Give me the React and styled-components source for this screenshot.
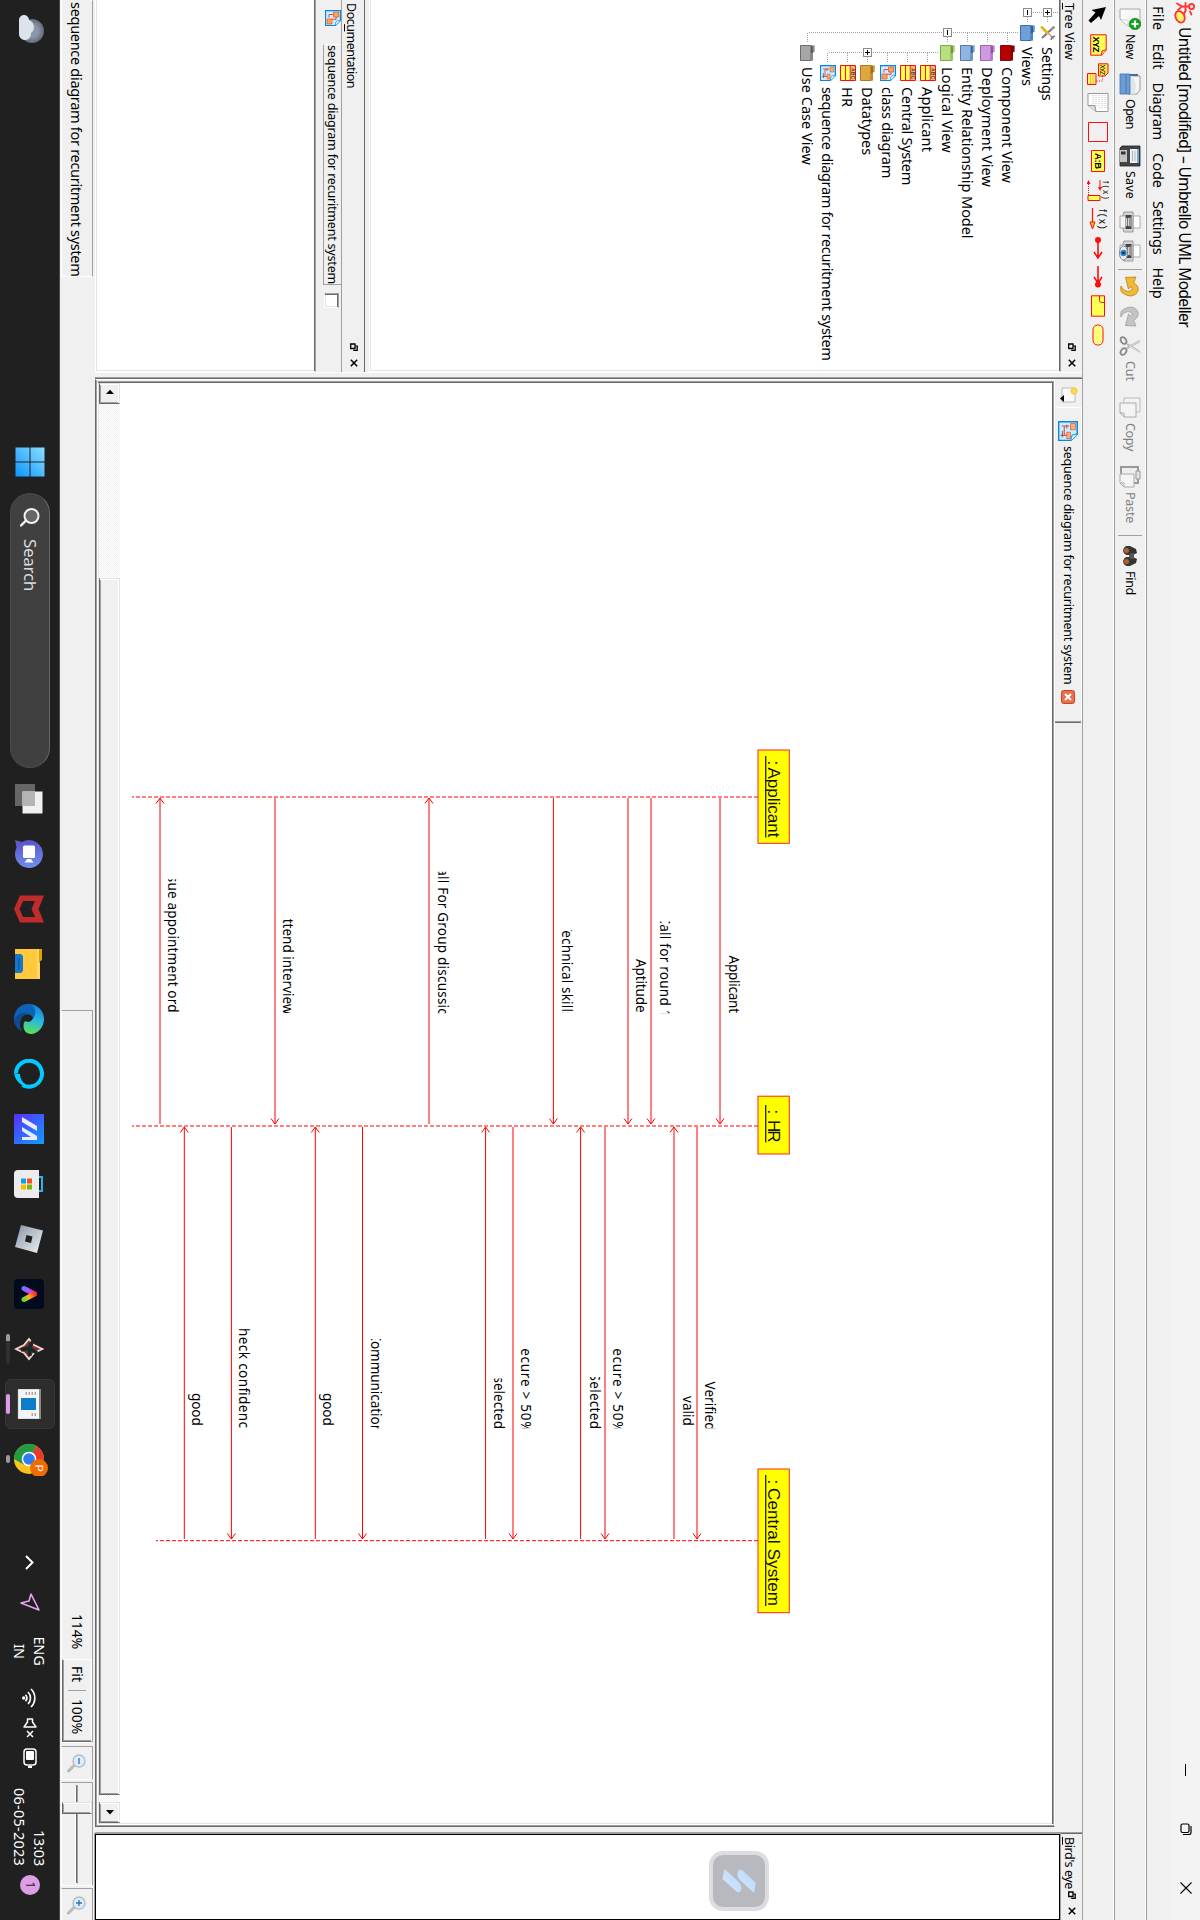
import React, { useLayoutEffect, useRef, useState } from 'react';
import styled, { createGlobalStyle, css } from 'styled-components';

const Global = createGlobalStyle`
  html, body { margin: 0; padding: 0; background: #f0f0f0; }
  * { box-sizing: border-box; }
  svg { display: block; flex: none; }
`;

const UI = `"Noto Sans", "Open Sans", sans-serif`;

const Viewport = styled.div`
  width: 1200px;
  height: 1920px;
  overflow: hidden;
`;

const Desktop = styled.div`
  width: 1920px;
  height: 1200px;
  transform-origin: 0 0;
  transform: translateX(1200px) rotate(90deg);
  display: flex;
  flex-direction: column;
  background: #f0f0f0;
  color: #000;
  font-family: ${UI};
  overflow: hidden;
`;

/* ---------- text that is tracked to a given width ---------- */

const Word = styled.span`
  display: inline-block;
  flex: none;
  white-space: pre;
  font-size: ${p => p.$size}px;
  line-height: ${p => p.$lh || 20}px;
  color: ${p => p.$color || 'inherit'};
  u { text-underline-offset: 2px; text-decoration-thickness: 1px; }
`;

function Label({ size = 14.5, width, lh, color, children }) {
  const ref = useRef(null);
  const [spacing, setSpacing] = useState(0);
  useLayoutEffect(() => {
    const el = ref.current;
    const natural = parseFloat(getComputedStyle(el).width);
    const count = el.textContent.length;
    if (width && count > 1) setSpacing((width - natural) / count);
  }, [width]);
  return (
    <Word ref={ref} $size={size} $lh={lh} $color={color} style={{ letterSpacing: spacing }}>
      {children}
    </Word>
  );
}

/* ---------- title, menus, toolbars ---------- */

const TitleBar = styled.header`
  height: 29px;
  flex: none;
  display: flex;
  align-items: center;
  background: #f3f3f3;
  padding: 0 26px 0 2px;
  gap: 3px;
`;
const WindowButtons = styled.div`
  margin-left: auto;
  margin-bottom: 2px;
  display: flex;
  gap: 47px;
`;
const MenuBar = styled.nav`
  height: 25px;
  flex: none;
  display: flex;
  align-items: center;
  gap: 13px;
  padding-left: 6px;
  border-bottom: 1px solid #a0a0a0;
`;
const Toolbar = styled.div`
  height: 32px;
  flex: none;
  display: flex;
  align-items: center;
  border-top: 1px solid #fff;
  border-bottom: 1px solid #a0a0a0;
  padding-left: ${p => p.$pad}px;
`;
const ToolButton = styled.div`
  width: ${p => p.$w}px;
  flex: none;
  display: flex;
  align-items: center;
  gap: 4px;
`;
const ToolSeparator = styled.div`
  width: 1px;
  height: 24px;
  margin-right: ${p => p.$gap}px;
  background: #a0a0a0;
`;
const Tool = styled.div`
  width: 29px;
  display: flex;
  justify-content: center;
`;

/* ---------- docks ---------- */

const Work = styled.main`
  height: 987px;
  flex: none;
  display: flex;
`;
const LeftDock = styled.aside`
  width: 373px;
  flex: none;
  display: flex;
  flex-direction: column;
  border-right: 1px solid #fff;
`;
const DockTitle = styled.div`
  height: ${p => p.$h}px;
  flex: none;
  display: flex;
  align-items: flex-start;
  justify-content: space-between;
  padding: 3px 5px 0 3px;
`;
const DockButtons = styled.div`
  display: flex;
  padding-top: 3px;
  gap: 8px;
`;
const Sunken = styled.div`
  background: #fff;
  border: 1px solid;
  border-color: #a0a0a0 #fff #fff #a0a0a0;
  box-shadow: inset 1px 1px 0 #696969, inset -1px -1px 0 #e3e3e3;
`;
const TreeFrame = styled(Sunken)`
  height: 692px;
  flex: none;
  border-left: 0;
  box-shadow: inset 0 1px 0 #696969, inset -1px -1px 0 #e3e3e3;
  padding: 2px 0 0 3px;
`;
const TreeRow = styled.div`
  height: 20px;
  display: flex;
  align-items: center;
`;
const Branch = styled.div`
  width: 20px;
  height: 20px;
  flex: none;
  display: flex;
`;
const TreeIcon = styled.div`
  width: 16px;
  margin: 0 6px 0 2px;
  flex: none;
`;
const DocDock = styled.section`
  margin-top: 4px;
  flex: 1;
  display: flex;
  flex-direction: column;
  border-top: 1px solid #696969;
`;
const DocHeader = styled.div`
  height: 26px;
  flex: none;
  border-top: 1px solid #a0a0a0;
  display: flex;
  align-items: flex-start;
  padding-left: 10px;
`;
const DocName = styled.div`
  margin-left: 18px;
  width: 241px;
  height: 18px;
  border: 1px solid;
  border-color: #a0a0a0 #a0a0a0 #a0a0a0 #fff;
  border-top: 0;
  display: flex;
  align-items: center;
`;
const CheckBox = styled(Sunken)`
  width: 15px;
  height: 15px;
  margin: 2px 0 0 8px;
`;
const DocBody = styled(Sunken)`
  flex: 1;
  border-left: 0;
  box-shadow: inset 0 1px 0 #696969, inset -1px -1px 0 #e3e3e3;
`;

/* ---------- central area ---------- */

const Mdi = styled.section`
  width: 1450px;
  margin-left: 4px;
  flex: none;
  display: flex;
  flex-direction: column;
  border-left: 1px solid #a0a0a0;
  box-shadow: inset 1px 0 0 #696969;
  padding-left: 1px;
`;
const TabBar = styled.div`
  height: 27px;
  flex: none;
  display: flex;
  padding-left: 8px;
`;
const NewTab = styled.div`
  width: 20px;
  display: flex;
  align-items: center;
`;
const Tab = styled.div`
  width: 316px;
  border: 1px solid #fff;
  border-right: 1px solid #696969;
  border-bottom: 0;
  box-shadow: inset -1px 0 0 #a0a0a0;
  border-radius: 2px 2px 0 0;
  display: flex;
  align-items: center;
  padding-left: 13px;
  gap: 5px;
`;
const TabClose = styled.div`
  width: 14px;
  height: 14px;
`;
const Raised = styled.div`
  flex: 1;
  width: 1448px;
  display: flex;
  border: 1px solid;
  border-color: #fff #696969 #696969 #fff;
  box-shadow: inset -1px -1px 0 #a0a0a0;
  padding: 0 1px 1px 1px;
`;
const Inner = styled(Sunken)`
  flex: 1;
  padding: 1px;
  display: flex;
  flex-direction: column;
`;
const ScrollBar = styled.div`
  height: 21px;
  display: flex;
  background: repeating-conic-gradient(#fff 0 25%, #f0f0f0 0 50%) 0 0 / 2px 2px;
`;
const bevel = css`
  background: #f0f0f0;
  border: 1px solid;
  border-color: #e3e3e3 #696969 #696969 #e3e3e3;
  box-shadow: inset 1px 1px 0 #fff, inset -1px -1px 0 #a0a0a0;
`;
const ScrollButton = styled.div`
  ${bevel}
  width: 21px;
  display: flex;
  justify-content: center;
  padding: 5px 1px 0 0;
`;
const ScrollHandle = styled.div`
  ${bevel}
  width: 1217px;
  margin-left: 174px;
  margin-right: auto;
`;
const BirdDock = styled.aside`
  flex: 1;
  margin-left: 5px;
  border-left: 1px solid #a0a0a0;
  box-shadow: inset 1px 0 0 #696969;
  padding-left: 1px;
  display: flex;
  flex-direction: column;
  min-width: 0;
`;
const BirdView = styled.div`
  flex: 1;
  background: #fff;
  border: 1px solid #000;
  outline: 1px solid #a0a0a0;
  padding: 290px 0 0 16px;
`;
const Badge = styled.div`
  width: 60px;
  height: 60px;
  border-radius: 14px;
  border: 4px solid #dcdce1;
  background: #b8b9be;
  display: flex;
  align-items: center;
  justify-content: center;
`;

/* ---------- status bar ---------- */

const StatusBar = styled.footer`
  height: 35px;
  flex: none;
  display: flex;
  padding: 2px 0 1px;
`;
const StatusCell = styled.div`
  width: ${p => p.$w}px;
  margin-left: ${p => p.$ml || 0}px;
  flex: none;
  border: 1px solid;
  border-color: #a0a0a0 #fff #fff ${p => (p.$open ? 'transparent' : '#a0a0a0')};
  display: flex;
  align-items: center;
  justify-content: ${p => p.$justify || 'flex-start'};
  padding-left: ${p => (p.$open ? 1 : 0)}px;
`;
const ZoomGroup = styled.div`
  width: 83px;
  height: 30px;
  margin-left: 10px;
  border: 1px solid;
  border-color: #fff #696969 #696969 #fff;
  box-shadow: inset -1px -1px 0 #a0a0a0;
  display: flex;
  align-items: center;
  padding-left: 6px;
  gap: 8px;
`;
const ZoomDivider = styled.div`
  width: 1px;
  height: 18px;
  background: #a0a0a0;
`;
const Groove = styled.div`
  width: 99px;
  height: 3px;
  border: 1px solid;
  border-color: #a0a0a0 #fff #fff #a0a0a0;
  background: #696969;
  display: flex;
  align-items: center;
`;
const Thumb = styled.div`
  ${bevel}
  flex: none;
  width: 12px;
  height: 30px;
  margin-left: 16px;
`;

/* ---------- task bar ---------- */

const TaskBar = styled.footer`
  height: 60px;
  flex: none;
  background: #202020;
  border-top: 1px solid #4b4845;
  color: #fff;
  display: flex;
  align-items: center;
  padding: 0 25px 1px 14px;
`;
const StartButton = styled.div`
  margin-left: 401px;
`;
const SearchBox = styled.div`
  width: 275px;
  height: 40px;
  margin-left: 16px;
  border-radius: 20px;
  background: #404040;
  border: 1px solid #4b4b4b;
  border-top-color: #666;
  display: flex;
  align-items: center;
  padding-left: 13px;
  gap: 12px;
`;
const Apps = styled.div`
  display: flex;
  margin-left: 3px;
`;
const AppSlot = styled.div`
  width: 55px;
  height: 58px;
  display: flex;
  align-items: center;
  justify-content: center;
`;
const AppPlate = styled.div`
  width: 50px;
  height: 50px;
  border-radius: 6px;
  display: flex;
  flex-direction: column;
  align-items: center;
  justify-content: flex-end;
  background: ${p => (p.$active ? '#2d2d2d' : 'transparent')};
  border: 1px solid ${p => (p.$active ? '#383838' : 'transparent')};
`;
const Mark = styled.div`
  width: ${p => p.$w}px;
  height: 4px;
  border-radius: 2px;
  margin-top: 4px;
  background: ${p => p.$c};
`;
const Tray = styled.div`
  margin-left: auto;
  display: flex;
  align-items: center;
`;
const TrayItem = styled.div`
  width: ${p => p.$w}px;
  margin-left: ${p => p.$ml}px;
  display: flex;
  flex-direction: column;
  align-items: ${p => p.$align || 'center'};
  flex: none;
`;
const Notice = styled.div`
  width: 20px;
  height: 20px;
  margin-left: 9px;
  border-radius: 50%;
  background: #dc9fe6;
  color: #222;
  font-size: 12px;
  line-height: 20px;
  text-align: center;
`;

/* ---------- icons ---------- */

const Svg = ({ s = 22, w, h, vb, children }) => (
  <svg width={w || s} height={h || s} viewBox={vb || `0 0 ${w || s} ${h || s}`} fill="none">{children}</svg>
);

const UmbrelloIcon = () => (
  <Svg s={22}>
    <g stroke="#f33" strokeWidth="1.8" strokeLinecap="round">
      <circle cx="4.500" cy="4.500" r="2.600" fill="#fdd" />
      <path d="M4.500 7.500v6.500M1 10.500h7M1.500 19l3-5 3.500 4M8 10l6 3" />
      <path d="M9.500 6l3-1.500" />
      <ellipse cx="14.800" cy="16" rx="6" ry="4.400" fill="#fff36b" transform="rotate(-25 14.800 16)" />
    </g>
  </Svg>
);
const NewIcon = () => (
  <Svg><defs><linearGradient id="pg" x2="1" y2="1"><stop stopColor="#f4f4f4" /><stop offset="1" stopColor="#fdfdfd" /></linearGradient></defs>
    <path d="M1 1h17v12l-7 8H1z" fill="url(#pg)" stroke="#aaa" /><path d="M18 13h-6v7z" fill="#fff" stroke="#bbb" strokeWidth=".6" />
    <circle cx="16" cy="6" r="5.800" fill="#12a11c" stroke="#0a7d13" strokeWidth=".6" /><path d="M16 2.500v7M12.500 6h7" stroke="#fff" strokeWidth="2.200" /></Svg>
);
const OpenIcon = () => (
  <Svg><path d="M1 3h6l1 2h13v16H1z" fill="#3a6aa8" /><path d="M3 1h14l4 3v9H3z" fill="#f4f6f8" stroke="#777" strokeWidth=".7" /><path d="M3 8l9-3 9 1v7H3z" fill="#dfe6ec" /><path d="M1 11h20v10H1z" fill="#6d9bd2" stroke="#3f6fae" strokeWidth=".8" /><path d="M1.500 15h19" stroke="#5a8ac4" strokeWidth="2" /></Svg>
);
const SaveIcon = () => (
  <Svg><path d="M1 1h20v20H3l-2-2z" fill="#444" stroke="#222" strokeWidth=".8" /><path d="M4 2h14v9H4z" fill="#eef2f6" /><path d="M4 2h14v2H4z" fill="#7ba4cf" /><path d="M6 6h10M6 8.500h10" stroke="#aab4be" /><path d="M5 14h12v7H5z" fill="#c4c4c4" /><path d="M6.500 15.500h3v4.500h-3z" fill="#333" /></Svg>
);
const PrintIcon = ({ eye }) => (
  <Svg><path d="M5 1h12v7H5z" fill="#fff" stroke="#999" strokeWidth=".8" /><path d="M1 8h20v9l-3 1H4l-3-1z" fill="#d4d4d4" stroke="#888" strokeWidth=".8" /><path d="M4 9.500h3v6H4zM15 9.500h3v6h-3z" fill="#444" /><path d="M6.500 9h9v3h-9z" fill="#999" /><path d="M5 15.500h12v5.500H5z" fill="#f4f4f4" stroke="#999" strokeWidth=".8" /><path d="M7 13.500h8" stroke="#777" />
    {eye && <><ellipse cx="13" cy="17.500" rx="7" ry="4" fill="#e8f0f6" stroke="#889" /><circle cx="13" cy="17.500" r="3.200" fill="#2d86c8" /><circle cx="13" cy="17.500" r="1.300" fill="#123" /></>}</Svg>
);
const UndoIcon = ({ c, d, flip }) => (
  <Svg>
    <g transform={flip ? 'translate(22 0) scale(-1 1)' : undefined}>
      <path d="M7 7.500C8 4.500 11 2.200 14.500 3c5.500 1.500 8 9 1.500 16.500-2 .8-4 1-6 .5 5-2.500 7-7.500 4-10.500-1.200-1-2.500-.8-3.300.5l2.300 2.500-11.500 3L1 5z" fill={c} stroke={d} strokeWidth=".9" strokeLinejoin="round" />
    </g>
  </Svg>
);
const CutIcon = () => (
  <Svg><path d="M6 1l7 13M17 1L9 14" stroke="#b5b5b5" strokeWidth="2" /><path d="M6 1l6 11M17 1l-6 11" stroke="#eee" strokeWidth=".7" /><ellipse cx="5.500" cy="17.500" rx="3.600" ry="2.500" stroke="#888" strokeWidth="1.800" transform="rotate(-35 5.500 17.500)" /><ellipse cx="16.500" cy="17.500" rx="3.600" ry="2.500" stroke="#888" strokeWidth="1.800" transform="rotate(35 16.500 17.500)" /></Svg>
);
const CopyIcon = () => (
  <Svg><path d="M1 1h14v16H1z" fill="#f2f2f2" stroke="#bbb" /><path d="M6 5h14v12l-4 4H6z" fill="#f4f4f4" stroke="#aaa" /><path d="M20 17h-4v4" stroke="#aaa" /></Svg>
);
const PasteIcon = () => (
  <Svg><path d="M1 3h16v17H1z" fill="#eee" stroke="#999" strokeWidth="2" /><path d="M5 1h8v4H5z" fill="#e4e4e4" stroke="#999" /><path d="M8 7h13v10l-4 4H8z" fill="#f4f4f4" stroke="#aaa" /><path d="M21 17h-4v4" stroke="#aaa" /></Svg>
);
const FindIcon = () => (
  <Svg><path d="M4 5l4-1 2 4v7H1v-4z" fill="#333" /><path d="M18 5l-4-1-2 4v7h9v-4z" fill="#333" /><path d="M8 7h6v5H8z" fill="#555" /><circle cx="5.500" cy="13.500" r="4.400" fill="#3b3733" /><circle cx="16.500" cy="13.500" r="4.400" fill="#3b3733" /><circle cx="5.500" cy="14.500" r="2.500" fill="#b0622a" /><circle cx="16.500" cy="14.500" r="2.500" fill="#b0622a" /></Svg>
);

const R = '#fb0f0c';
const svgFont = { fontFamily: 'Liberation Sans, sans-serif' };
const TOOLS = [
  <Svg><path d="M3 2l13 5-4 2 7 8-2.500 2.500-8-7-2.500 4z" fill="#000" transform="translate(-1 1)" /></Svg>,
  <Svg><path d="M.8 2.800H16l5.200 4.500v11H.8z" fill="#ffff54" stroke={R} /><path d="M16 2.800c1 3-1 5 5.200 4.500" fill="#ffc04a" stroke={R} /><text x="2.500" y="15.800" fontSize="9" fontWeight="bold" fill="#000" textLength="16" {...svgFont}>XYZ</text></Svg>,
  <Svg><path d="M.8 1H10l3 3v6.500H.8z" fill="#ffe94a" stroke={R} /><text x="1.500" y="9" fontSize="6.500" fill="#000" textLength="10.500" {...svgFont}>XYZ</text><path d="M13 6.500h5v7" stroke={R} strokeDasharray="1 1.500" /><path d="M10.500 13h11v8.500h-11z" fill="#ffef70" stroke={R} /><path d="M11 16h10M11 18.500h10" stroke="#f90" strokeWidth=".6" /></Svg>,
  <Svg><path d="M1.500 1h18v12l-6 8h-12z" fill="#fff" stroke="#999" /><path d="M3 4h14M3 7h14M3 10h14M3 13h12M3 16h10" stroke="#b8c4cc" strokeDasharray="1 1" /><path d="M19.500 13l-6 1v7" fill="#ddd" stroke="#999" /></Svg>,
  <Svg><path d="M1.500 1.500h19v19h-19z" stroke={R} /></Svg>,
  <Svg><path d="M.5 4.500h21v13H.5z" fill="#ffff54" stroke={R} /><text x="3" y="14.500" fontSize="9.500" fontWeight="bold" fill="#000" textLength="16" {...svgFont}>A:B</text></Svg>,
  <Svg><text x="2" y="6.500" fontSize="8.500" fill="#111" textLength="18" {...svgFont}>f(x)</text><path d="M1 9h9" stroke={R} /><path d="M8 7l4 2-4 2z" fill={R} /><path d="M16.500 9h5v12h-5z" fill="#ffff54" stroke={R} /><path d="M3 20.500h13" stroke={R} strokeDasharray="1 1" /><path d="M5 18.500l-4 2 4 2z" fill={R} /></Svg>,
  <Svg><text x="1" y="10" fontSize="10.500" fill="#111" textLength="20" {...svgFont}>f(x)</text><path d="M0 16.500h16" stroke={R} strokeWidth="1.200" /><path d="M14 14l7 2.500-7 2.500z" fill="#ffc000" stroke={R} /></Svg>,
  <Svg><circle cx="3" cy="11" r="3" fill={R} /><path d="M3 11h17M15 7l6 4-6 4" stroke={R} strokeWidth="1.600" /></Svg>,
  <Svg><circle cx="18.500" cy="11" r="3" fill={R} /><path d="M0 11h18M11 7l6 4-6 4" stroke={R} strokeWidth="1.600" /></Svg>,
  <Svg><path d="M.8 4.500h20.400v13H.8z" fill="#ffff54" stroke={R} /><path d="M1 9.500h4.500c2 0 2-2 2-5" stroke={R} /></Svg>,
  <Svg><rect x="1" y="6" width="20" height="10" rx="4.500" fill="#ffff80" stroke={R} /></Svg>,
];

const FloatIcon = () => (
  <Svg s={8}><path d="M3 .8h4.300v4M1 3h4.500v4.300H1z" stroke="#000" strokeWidth="1.300" /><path d="M3 0v3" stroke="#000" /></Svg>
);
const CloseIcon = () => (
  <Svg s={8}><path d="M.8.8l6.400 6.400M7.200.8L.8 7.200" stroke="#000" strokeWidth="1.500" /></Svg>
);

const Folder = ({ c, d }) => (
  <Svg s={16}><path d="M.5 1.500h6l1 1.500h8v12.500H.5z" fill={d} /><path d="M.5 5h15v10.500H.5z" fill={c} stroke={d} strokeWidth=".8" /><path d="M1 2.300h5.500M8 4h7" stroke={c} strokeWidth="1.200" /></Svg>
);
const ClassIcon = () => (
  <Svg s={16}><path d="M.5 .5h15v15H.5z" fill="#fff" stroke={R} /><path d="M1 1h14v4.500H1z" fill="#e8c070" /><path d="M1 6.500h14v3.500H1zM1 11h14v4H1z" fill="#ffff50" /><path d="M.5 5.800h15M.5 10.500h15" stroke={R} /><text x="3" y="5.200" fontSize="5" fontWeight="bold" fill="#543" textLength="11" {...svgFont}>ABC</text></Svg>
);
const DiagramIcon = ({ seq, s = 16 }) => (
  <Svg w={s} h={s} vb="0 0 16 16"><path d="M.6 .6h9.900l5 5v9.900H.6z" fill="#c9efff" stroke="#0b84e0" strokeWidth="1.200" /><path d="M10.500 .6c.5 3-.5 5 5 5" fill="#eafaff" stroke="#2aa0f0" />
    {seq ? <><path d="M2 2h5v4H2zM9 6h5v3H9z" fill="#f2b36e" stroke="#d55" strokeWidth=".6" /><path d="M4 7v6M11.500 9v5M4 11h7" stroke="#e44" strokeWidth=".9" /><path d="M3 9h3M8 12.500h5" stroke="#666" strokeWidth=".8" /></>
      : <><path d="M2 2.500h5v5H2zM9 9h5v5H9z" fill="#f7a45a" stroke="#e55020" strokeWidth=".7" /><path d="M7 5h2.500l-.5 4M4.500 8v4h3" stroke="#e33" strokeWidth=".9" /></>}</Svg>
);
const SettingsIcon = () => (
  <Svg s={16}><path d="M2 2l11 12" stroke="#777" strokeWidth="2" /><path d="M1 1l3 .5L5 5l-3-.5z" fill="#999" /><path d="M14 2L7 9" stroke="#aaa" strokeWidth="1.600" /><path d="M7.500 9L2.500 14" stroke="#eab21c" strokeWidth="3" strokeLinecap="round" /><path d="M11 1l1 3 3 1" stroke="#777" strokeWidth="1.500" /></Svg>
);

/* one 20px cell of the dotted tree lines: t = up, b = down, r = right, box = +/- */
const Cell = ({ k = '', box }) => (
  <Branch>
    <Svg s={20}>
      <g stroke="#a0a0a0" strokeDasharray="1 1">
        {k.includes('t') && <path d="M9.500 0v10" />}
        {k.includes('b') && <path d="M9.500 10v10" />}
        {k.includes('r') && <path d="M10 10.500h10" />}
      </g>
      {box && <><rect x="5.500" y="6.500" width="8" height="8" fill="#fff" stroke="#8c8c8c" /><path d={box === '+' ? 'M7 10.500h5M9.500 8v5' : 'M7 10.500h5'} stroke="#000" /></>}
    </Svg>
  </Branch>
);

const TREE = [
  [[['tbr', '+']], <SettingsIcon />, 'Settings', 53.5],
  [[['tr', '-']], <Folder c="#6f9fd8" d="#2f5f9f" />, 'Views', 39],
  [['', 'tbr'], <Folder c="#b80000" d="#6e0000" />, 'Component View', 116],
  [['', 'tbr'], <Folder c="#cf9be0" d="#8d53a6" />, 'Deployment View', 120],
  [['', 'tbr'], <Folder c="#8fb4e2" d="#41699f" />, 'Entity Relationship Model', 171.5],
  [['', ['tbr', '-']], <Folder c="#b9e080" d="#6f9c30" />, 'Logical View', 86],
  [['', 'tb', 'tbr'], <ClassIcon />, 'Applicant', 65],
  [['', 'tb', 'tbr'], <ClassIcon />, 'Central System', 98],
  [['', 'tb', 'tbr'], <DiagramIcon />, 'class diagram', 91],
  [['', 'tb', ['tbr', '+']], <Folder c="#dda63e" d="#a06c10" />, 'Datatypes', 68],
  [['', 'tb', 'tbr'], <ClassIcon />, 'HR', 20.5],
  [['', 'tb', 'tr'], <DiagramIcon seq />, 'sequence diagram for recuritment system', 273.5],
  [['', 'tr'], <Folder c="#a6a6a6" d="#5c5c5c" />, 'Use Case View', 98],
];

/* ---------- sequence diagram ---------- */

const LIFELINES = [
  { x: 797, x0: 750, x1: 843.3, end: 1068, name: 'Applicant', tx: 767.5, tw: 70, ux: 756, cx: 760.5 },
  { x: 1126, x0: 1096.2, x1: 1154, end: 1068, name: 'HR', tx: 1120, tw: 22.5, ux: 1105, cx: 1109.5 },
  { x: 1540.7, x0: 1469, x1: 1612.7, end: 1044, name: 'Central System', tx: 1488, tw: 118, ux: 1475, cx: 1479.5 },
];
const MESSAGES = [
  [0, 480, 1], [0, 549, 1], [0, 572, 1], [0, 646.6, 1], [0, 771, -1], [0, 925, 1], [0, 1040, -1],
  [1, 503, 1], [1, 526, -1], [1, 595, 1], [1, 619.4, -1], [1, 687, 1], [1, 714.4, -1],
  [1, 837.5, 1], [1, 884.7, -1], [1, 968.6, 1], [1, 1015.7, -1],
];
/* text, clip left, clip right, text x, text width, baseline */
const NOTES = [
  ['Applicant', 955, 1014, 955.5, 57.5, 471],
  ['Call for round 1', 921.5, 1013.3, 915.5, 102, 540.2],
  ['Aptitude', 958.5, 1014, 959, 53.5, 563.8],
  ['Technical skills', 930, 1013, 923.5, 95, 638],
  ['Call For Group discussion', 871.7, 1013.2, 859.5, 165.5, 762.5],
  ['Attend interview', 918.8, 1013, 910, 104.5, 916.7],
  ['Issue appointment order', 879.3, 1013, 864.5, 161.5, 1031.7],
  ['Verified', 1381, 1428.3, 1381.5, 49, 494.6],
  ['valid', 1395.5, 1428.3, 1396, 29.8, 517.5],
  ['Secure > 50%', 1348, 1428.3, 1340, 92.5, 586.6],
  ['Selected', 1377, 1429, 1373.5, 55.5, 610.3],
  ['Secure > 50%', 1348, 1428.3, 1340, 92.5, 678.6],
  ['selected', 1378.5, 1428.3, 1376.5, 52.5, 706],
  ['Communication', 1339, 1428.6, 1332.5, 100.5, 829.4],
  ['good', 1392, 1428, 1393, 32.8, 876.8],
  ['Check confidence', 1328, 1428, 1319, 117, 960.6],
  ['good', 1392, 1428, 1393, 32.8, 1007.7],
];

const Diagram = () => (
  <svg width="1440" height="932" viewBox="383 148 1440 932" fill="none">
    {LIFELINES.map(l => (
      <g key={l.name}>
        <path d={`M${l.x} 442V${l.end}`} stroke="#f00" strokeDasharray="4 2" />
        <rect x={l.x0} y="410.700" width={l.x1 - l.x0} height="31.300" fill="#ff0" stroke="#f22" />
        <text x={l.cx} y="432" fontSize="17" fill="#111" {...svgFont}>:</text>
        <text x={l.tx} y="432" fontSize="17" fill="#111" textLength={l.tw} {...svgFont}>{l.name}</text>
        <path d={`M${l.ux} 434.300H${l.tx + l.tw}`} stroke="#222" strokeWidth="1.300" />
      </g>
    ))}
    {MESSAGES.map(([lane, y, dir]) => {
      const a = lane ? 1127 : 798;
      const b = lane ? 1539 : 1124;
      const tip = dir > 0 ? b : a;
      return (
        <path key={lane + '-' + y} stroke="#f00"
          d={`M${a} ${y}H${b}M${tip - dir * 5.5} ${y - 4}L${tip} ${y}L${tip - dir * 5.5} ${y + 4}`} />
      );
    })}
    {NOTES.map(([t, c0, c1, x, w, y], i) => (
      <svg key={i} x={c0} y={y - 15} width={c1 - c0} height="22" overflow="hidden">
        <text x={x - c0} y="15" fontSize="13.500" fill="#000" textLength={w} fontFamily="Noto Sans, sans-serif">{t}</text>
      </svg>
    ))}
  </svg>
);

/* ---------- task bar icons ---------- */

const WeatherIcon = () => (
  <Svg s={32}><defs><radialGradient id="moon"><stop offset=".5" stopColor="#8b97a6" /><stop offset="1" stopColor="#5f6b7a" /></radialGradient></defs><circle cx="17" cy="14" r="12" fill="url(#moon)" /><path d="M6 27a5 5 0 0 1 0-10 7.500 7.500 0 0 1 13-2 6 6 0 0 1 2 12z" fill="#dde3ea" /></Svg>
);
const WinIcon = () => (
  <Svg s={30}><defs><linearGradient id="win" gradientUnits="userSpaceOnUse" x1="0" y1="0" x2="30" y2="30"><stop stopColor="#8fe0ff" /><stop offset="1" stopColor="#0a93ff" /></linearGradient></defs><path d="M.5.5h14v14H.5zM15.500.5h14v14h-14zM.5 15.500h14v14H.5zM15.500 15.500h14v14h-14z" fill="url(#win)" /></Svg>
);
const SearchIcon = () => (
  <Svg s={20}><circle cx="9" cy="8.500" r="7" stroke="#f2f2f2" strokeWidth="2" fill="#666" /><path d="M13.500 14l5 5" stroke="#f2f2f2" strokeWidth="2.400" strokeLinecap="round" /></Svg>
);

const APPS = [
  <Svg s={30}><path d="M0 9h22v20H0z" fill="#666" /><path d="M7.500 1.500h22v20h-22z" fill="#f0f0f0" /><path d="M7.500 9H22v12.500H7.500z" fill="#b5b5b5" /></Svg>,
  <Svg s={30}><defs><linearGradient id="chat" x1="1" x2="0" y1=".6" y2=".7"><stop stopColor="#6f8fe8" /><stop offset="1" stopColor="#5a52c8" /></linearGradient></defs><path d="M15 1a14 14 0 1 1-6.500 26.400L1 29l2-7A14 14 0 0 1 15 1z" fill="url(#chat)" /><rect x="6.500" y="9" width="12.500" height="12" rx="1.500" fill="#fff" /><path d="M20 13l3.500-2.500v9L20 17z" fill="#fff" /></Svg>,
  <Svg s={30}><path fillRule="evenodd" d="M1.500 0L15 5.500 28.500 0v24L15 30 1.500 24zM7 9v12l8 3.500 8-3.500V9l-8 3.500z" fill="#c02c2c" /></Svg>,
  <Svg s={30}><path d="M0 2h11l2.500 3.500H0z" fill="#dfa000" /><path d="M0 5h30v24H0z" fill="#ffc83d" /><path d="M0 5h12l2-1h16v3H0z" fill="#ffd766" /><path d="M5 29v-6l2-2h15l2 2v6z" fill="#1478cc" /><path d="M9 25h12" stroke="#0c4f94" /></Svg>,
  <Svg s={30}><defs><linearGradient id="eg" x1="0" y1=".3" x2="1" y2=".5"><stop stopColor="#0f7fdc" /><stop offset=".55" stopColor="#2bb8e0" /><stop offset="1" stopColor="#5be05a" /></linearGradient></defs><path d="M0 14C1 6 7 0 15 0s15 6 15 13c0 5-4 7.500-8 7.500s-5.500-1.500-4.500-3 .5-4-1.500-5.500C10 8 3 9 0 14z" fill="url(#eg)" /><path d="M0 14c2-5 9-7.500 14.500-3-5 1-5.500 7-2 10.500S22 25.500 27.500 22C24 28 19 30 15 30 6 30-1 23 0 14z" fill="#0b63b8" /><path d="M13 12c-4 2-4 7-.5 9.500S22 25.500 27.500 22C24 28 19 30 16 30 9 27 6 17 13 12z" fill="#0e4a90" /></Svg>,
  <Svg s={30}><path d="M14 28A13 13 0 1 1 26 21.500" stroke="#00caff" strokeWidth="4" /><path d="M28 18c-2 6-7 11-14 12l1-6c5 0 9-3 11-7z" fill="#00caff" /></Svg>,
  <Svg s={30}><defs><linearGradient id="wd" x1="0" y1="1" x2="1" y2=".2"><stop stopColor="#5a2dff" /><stop offset="1" stopColor="#1595ff" /></linearGradient></defs><path d="M0 0h30v30H0z" fill="url(#wd)" /><path d="M3 22L12 7h5L8 22zM13 22l9-15h4v15h-3v-9l-6 9z" fill="#e9edff" /></Svg>,
  <Svg s={30}><path d="M8 8V2h14v6" stroke="#27b5f0" strokeWidth="2" /><path d="M1 5h28v21a4 4 0 0 1-4 4H5a4 4 0 0 1-4-4z" fill="#ececec" /><path d="M9.500 12h5v5h-5z" fill="#f25022" /><path d="M15.500 12h5v5h-5z" fill="#7fba00" /><path d="M9.500 18h5v5h-5z" fill="#00a4ef" /><path d="M15.500 18h5v5h-5z" fill="#ffb900" /></Svg>,
  <Svg s={30}><defs><linearGradient id="rb" x2="1" y1="1" y2="0"><stop stopColor="#8896a4" /><stop offset="1" stopColor="#eef2f6" /></linearGradient></defs><path fillRule="evenodd" d="M6.500 1L29 7l-6 22L1 23zM12.500 11.500l-1.500 6 6.500 1.500 1.500-6z" fill="url(#rb)" /></Svg>,
  <Svg s={30}><defs><linearGradient id="cl" gradientUnits="userSpaceOnUse" x1="8" y1="22" x2="15" y2="7"><stop stopColor="#5a7bff" /><stop offset=".5" stopColor="#c04dff" /><stop offset="1" stopColor="#ff2048" /></linearGradient><linearGradient id="cr" gradientUnits="userSpaceOnUse" x1="15" y1="8" x2="22" y2="21"><stop stopColor="#ff2030" /><stop offset=".5" stopColor="#ffb020" /><stop offset="1" stopColor="#52e03c" /></linearGradient></defs><rect width="30" height="30" rx="4" fill="#020b1e" /><path d="M9.500 20L15 9.500" stroke="url(#cl)" strokeWidth="5" strokeLinecap="round" /><path d="M15 9.500l5.500 10.500" stroke="url(#cr)" strokeWidth="5" strokeLinecap="round" /></Svg>,
  <Svg s={30}><path d="M15 1.500l4 8.500 6 5-6 5-4 8-4-8-6-5 6-5z" fill="#8a2a1c" stroke="#e8ddd6" strokeWidth="1.800" /><path d="M7 11l7 4 8-1M19 7l-5 8 2 8" stroke="#0f2a2e" strokeWidth="3.600" /></Svg>,
  <Svg s={30}><path d="M0 4h30v22H0z" fill="#f5f5f5" stroke="#999" strokeWidth=".5" /><path d="M0 3h30v2H0z" fill="#8a8a8a" /><path d="M9 8h12v15H9z" fill="#0f7cc9" /><path d="M4.500 8v12M25.500 8v6" stroke="#aaa" strokeWidth="3" strokeDasharray="1.500 1.500" /></Svg>,
  <Svg w={34} h={34} vb="-2 -4 34 34"><circle cx="15" cy="15" r="15" fill="#fcc31e" /><path d="M15 15L2 7.500A15 15 0 0 1 28 7.500z" fill="#e33b2e" /><path d="M2 7.500A15 15 0 0 0 15 30l6.500-11.300L15 15z" fill="#259a45" /><circle cx="15" cy="15" r="7.300" fill="#fff" /><circle cx="15" cy="15" r="5.800" fill="#2f7bf0" /><circle cx="24" cy="5" r="9" fill="#ee6c00" /><text x="20.800" y="9" fontSize="10.500" fill="#fff" {...svgFont}>P</text></Svg>,
];
const MARKS = { 10: [30, 'linear-gradient(90deg, #9a9a9a 7px, #2f2f2f 7px)'], 11: [20, '#dc9fe6'], 12: [8, '#9a9a9a'] };

const Magnifier = ({ sign }) => (
  <Svg s={20}><path d="M12 12.500l6 6" stroke="#aaa" strokeWidth="2.600" strokeLinecap="round" /><path d="M12 12.500l6 6" stroke="#e4e4e4" strokeWidth=".8" /><circle cx="8" cy="8" r="6" fill="#dcecfa" stroke="#b4bec8" strokeWidth="1.400" /><path d={sign === '+' ? 'M5 8h6M8 5v6' : 'M5 8h6'} stroke="#3a6fb0" strokeWidth="1.300" /></Svg>
);

export default function App() {
  return (
    <Viewport>
      <Global />
      <Desktop>
        <TitleBar>
          <UmbrelloIcon />
          <Label size={15.5} width={300}>Untitled [modified] – Umbrello UML Modeller</Label>
          <WindowButtons>
            <Svg s={12}><path d="M0 6.500h12" stroke="#000" /></Svg>
            <Svg s={12}><rect x="1" y="3" width="8.500" height="8" rx="1.500" stroke="#000" strokeWidth="1.200" /><path d="M3 1h6.500c1 0 2 .8 2 2v6" stroke="#000" strokeWidth="1.200" /></Svg>
            <Svg s={12}><path d="M.5.5l11 11M11.500.5l-11 11" stroke="#000" strokeWidth="1.100" /></Svg>
          </WindowButtons>
        </TitleBar>
        <MenuBar>
          {[['File', 24.5], ['Edit', 26], ['Diagram', 57.5], ['Code', 35], ['Settings', 53.5], ['Help', 31]].map(([t, w]) => (
            <Label key={t} size={14.5} width={w}>{t}</Label>
          ))}
        </MenuBar>
        <Toolbar $pad={8}>
          <ToolButton $w={65}><NewIcon /><Label size={12.5} width={25}>New</Label></ToolButton>
          <ToolButton $w={72}><OpenIcon /><Label size={12.5} width={30}>Open</Label></ToolButton>
          <ToolButton $w={66}><SaveIcon /><Label size={12.5} width={28}>Save</Label></ToolButton>
          <ToolButton $w={29}><PrintIcon /></ToolButton>
          <ToolButton $w={29}><PrintIcon eye /></ToolButton>
          <ToolSeparator $gap={6} />
          <ToolButton $w={29}><UndoIcon c="#efb93a" d="#c08a10" /></ToolButton>
          <ToolButton $w={30}><UndoIcon c="#c4c4c4" d="#a4a4a4" flip /></ToolButton>
          <ToolButton $w={62}><CutIcon /><Label size={12.5} width={20} color="#808080">Cut</Label></ToolButton>
          <ToolButton $w={69}><CopyIcon /><Label size={12.5} width={28} color="#808080">Copy</Label></ToolButton>
          <ToolButton $w={69}><PasteIcon /><Label size={12.5} width={31} color="#808080">Paste</Label></ToolButton>
          <ToolSeparator $gap={9} />
          <ToolButton $w={60}><FindIcon /><Label size={12.5} width={24}>Find</Label></ToolButton>
        </Toolbar>
        <Toolbar $pad={1}>
          {TOOLS.map((t, i) => <Tool key={i}>{t}</Tool>)}
        </Toolbar>

        <Work>
          <LeftDock>
            <DockTitle $h={21}>
              <Label size={12.5} width={57}><u>T</u>ree View</Label>
              <DockButtons><FloatIcon /><CloseIcon /></DockButtons>
            </DockTitle>
            <TreeFrame>
              {TREE.map(([cells, icon, text, w]) => (
                <TreeRow key={text}>
                  {cells.map((c, i) => Array.isArray(c) ? <Cell key={i} k={c[0]} box={c[1]} /> : <Cell key={i} k={c} />)}
                  <TreeIcon>{icon}</TreeIcon>
                  <Label size={14.5} width={w}>{text}</Label>
                </TreeRow>
              ))}
            </TreeFrame>
            <DocDock>
              <DockTitle $h={22}>
                <Label size={12.5} width={85}>Doc<u>u</u>mentation</Label>
                <DockButtons><FloatIcon /><CloseIcon /></DockButtons>
              </DockTitle>
              <DocHeader>
                <DiagramIcon />
                <DocName><Label size={12.5} width={239} lh={17}>sequence diagram for recuritment system</Label></DocName>
                <CheckBox />
              </DocHeader>
              <DocBody />
            </DocDock>
          </LeftDock>

          <Mdi>
            <TabBar>
              <NewTab>
                <Svg w={18} h={20}><path d="M1 3h14v13H1z" fill="#fafafa" stroke="#bbb" /><circle cx="4" cy="4" r="3.200" fill="#ffd84a" stroke="#f0c020" strokeWidth=".6" /><path d="M8 14h7l-3.500 4z" fill="#000" /></Svg>
              </NewTab>
              <Tab>
                <DiagramIcon seq s={20} />
                <Label size={12.5} width={238.5}>sequence diagram for recuritment system</Label>
                <TabClose><Svg s={14}><rect x=".5" y=".5" width="13" height="13" rx="2" fill="#e4734c" stroke="#d0402c" /><path d="M4 4l6 6M10 4l-6 6" stroke="#fff" strokeWidth="2" /></Svg></TabClose>
              </Tab>
            </TabBar>
            <Raised>
              <Inner>
                <Diagram />
                <ScrollBar>
                  <ScrollButton><Svg s={8}><path d="M5 0v8L.8 4z" fill="#000" /></Svg></ScrollButton>
                  <ScrollHandle />
                  <ScrollButton><Svg s={8}><path d="M2 0v8l4.500-4z" fill="#000" /></Svg></ScrollButton>
                </ScrollBar>
              </Inner>
            </Raised>
          </Mdi>

          <BirdDock>
            <DockTitle $h={22}>
              <Label size={12.5} width={52}><u>B</u>ird's eye</Label>
              <DockButtons><FloatIcon /><CloseIcon /></DockButtons>
            </DockTitle>
            <BirdView>
              <Badge>
                <Svg s={36}><defs><linearGradient id="bd" x2="1" y2="1"><stop stopColor="#b5d8fb" /><stop offset="1" stopColor="#d5e9fd" /></linearGradient></defs><path d="M7 15L19.700 1.200 30 3 17 17C13 21 5 20 7 15z" fill="url(#bd)" /><path d="M29 20L16 34.500 5.700 32.500 19 18.300C23 14 31 15 29 20z" fill="url(#bd)" /></Svg>
              </Badge>
            </BirdView>
          </BirdDock>
        </Work>

        <StatusBar>
          <StatusCell $w={277} $open><Label size={14.5} width={274.5}>sequence diagram for recuritment system</Label></StatusCell>
          <StatusCell $w={733} $ml={733} $justify="flex-end">
            <Label size={14} width={35}>114%</Label>
            <ZoomGroup>
              <Label size={14} width={16}>Fit</Label>
              <ZoomDivider />
              <Label size={14} width={35}>100%</Label>
            </ZoomGroup>
          </StatusCell>
          <StatusCell $w={34} $ml={3} $justify="center"><Magnifier sign="-" /></StatusCell>
          <StatusCell $w={104} $ml={2} $justify="center"><Groove><Thumb /></Groove></StatusCell>
          <StatusCell $w={34} $ml={2} $justify="center"><Magnifier sign="+" /></StatusCell>
        </StatusBar>

        <TaskBar>
          <WeatherIcon />
          <StartButton><WinIcon /></StartButton>
          <SearchBox><SearchIcon /><Label size={17} width={52} color="#ddd">Search</Label></SearchBox>
          <Apps>
            {APPS.map((icon, i) => (
              <AppSlot key={i}>
                <AppPlate $active={i === 11}>
                  {icon}
                  <Mark $w={MARKS[i] ? MARKS[i][0] : 4} $c={MARKS[i] ? MARKS[i][1] : 'transparent'} />
                </AppPlate>
              </AppSlot>
            ))}
          </Apps>
          <Tray>
            <TrayItem $w={15} $ml={0}><Svg w={15} h={9}><path d="M1 8l6.500-6.500L14 8" stroke="#fff" strokeWidth="2" /></Svg></TrayItem>
            <TrayItem $w={18} $ml={23}><Svg w={18} h={20}><path d="M17 1L10 19l-2-8-7-2z" stroke="#e6a6ee" strokeWidth="1.600" strokeLinejoin="round" /></Svg></TrayItem>
            <TrayItem $w={30} $ml={25}><Label size={14.5} width={29}>ENG</Label><Label size={14.5} width={14}>IN</Label></TrayItem>
            <TrayItem $w={20} $ml={22}><Svg w={20} h={16}><g stroke="#fff" strokeWidth="1.700"><path d="M1 7a12.500 12.500 0 0 1 18 0M4 10a8.500 8.500 0 0 1 12 0M6.800 12.500a4.800 4.800 0 0 1 6.400 0" /></g><circle cx="10" cy="14.300" r="1.700" fill="#fff" /></Svg></TrayItem>
            <TrayItem $w={20} $ml={10}><Svg w={20} h={14}><path d="M1 4.500h3L9 1v12L4 9.500H1z" stroke="#fff" strokeWidth="1.500" strokeLinejoin="round" /><path d="M13 4l6 6M19 4l-6 6" stroke="#fff" strokeWidth="1.500" /></Svg></TrayItem>
            <TrayItem $w={20} $ml={10}><Svg w={20} h={14}><rect x="1" y="1" width="16" height="12" rx="3" stroke="#fff" strokeWidth="1.500" /><rect x="3" y="3" width="9" height="8" rx="1" fill="#fff" /><path d="M19 5v4" stroke="#fff" strokeWidth="2" /></Svg></TrayItem>
            <TrayItem $w={80} $ml={18} $align="flex-end"><Label size={14.5} width={36}>13:03</Label><Label size={14.5} width={78}>06-05-2023</Label></TrayItem>
            <Notice>1</Notice>
          </Tray>
        </TaskBar>
      </Desktop>
    </Viewport>
  );
}
